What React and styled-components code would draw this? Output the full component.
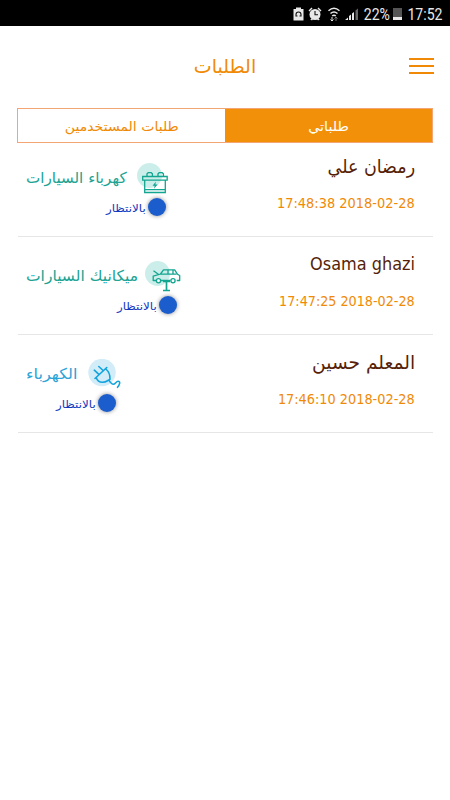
import React, { useState } from "react";
import styled, { createGlobalStyle } from "styled-components";

const GlobalStyle = createGlobalStyle`
  * {
    box-sizing: border-box;
  }
  body {
    margin: 0;
    background: #fff;
    font-family: "DejaVu Sans", sans-serif;
  }
`;

const Screen = styled.div`
  min-height: 800px;
  background: #fff;
`;

const StatusBar = styled.div`
  height: 26px;
  padding: 2px 8px 0 0;
  display: flex;
  align-items: center;
  justify-content: flex-end;
  background: #000;
  color: #e8e8e8;
  font-family: Roboto, sans-serif;
  font-size: 16px;
  white-space: nowrap;
`;

const StatusIcons = styled.svg`
  display: block;
  margin-right: 5px;
`;

const Percent = styled.span`
  width: 26px;
  display: flex;
  justify-content: center;
`;

const Battery = styled.span`
  width: 9px;
  height: 12px;
  margin: 0 5px 0 3px;
  background: linear-gradient(#555 75%, #e8e8e8 75%);
`;

const Clock = styled.span`
  width: 35px;
  display: flex;
  justify-content: center;
`;

const Squeeze = styled.span`
  display: inline-block;
  flex-shrink: 0;
  white-space: nowrap;
  transform: scaleX(${(p) => p.$x || 1});
  transform-origin: ${(p) => p.$origin || "center"};
`;

const Header = styled.header`
  height: 82px;
  padding: 0 16px 3px;
  display: grid;
  grid-template-columns: 26px 1fr 26px;
  align-items: center;
`;

const Title = styled.h1`
  margin: 0;
  grid-column: 2;
  text-align: center;
  font-size: 19px;
  line-height: 24px;
  font-weight: normal;
  color: #f08a06;
`;

const MenuButton = styled.button`
  height: 16px;
  padding: 0;
  border: 0;
  background: none;
  display: flex;
  flex-direction: column;
  align-items: flex-end;
  justify-content: space-between;
`;

const MenuLine = styled.span`
  width: 25px;
  height: 2px;
  background: #f08a06;
`;

const Tabs = styled.div`
  height: 35px;
  margin: 0 17px;
  display: flex;
  border: 1px solid #f3a673;
`;

const Tab = styled.button`
  flex: 1;
  padding: 1px 0 0;
  border: 0;
  font-family: inherit;
  font-size: 13px;
  color: ${(p) => (p.$active ? "#fff" : "#f08a06")};
  background: ${(p) => (p.$active ? "#f29109" : "#fff")};
`;

const List = styled.div`
  margin: -4px 17px 0 18px;
`;

const Row = styled.div`
  height: 98px;
  padding: 0 18px 0 8px;
  display: flex;
  justify-content: space-between;
  border-bottom: 1px solid #e6e6e6;
`;

const Service = styled.div`
  padding-top: 24px;
  color: ${(p) => p.$color};
`;

const ServiceLine = styled.div`
  height: 32px;
  display: flex;
`;

const ServiceName = styled.div`
  width: ${(p) => p.$width}px;
  line-height: 31px;
  font-size: 15px;
  white-space: nowrap;
`;

const Waiting = styled.div`
  height: 24px;
  padding-left: ${(p) => p.$indent}px;
  display: flex;
  align-items: center;
  color: #1238bf;
  font-size: 11px;
`;

const WaitingText = styled.span`
  width: 42px;
  padding-top: 2px;
  white-space: nowrap;
`;

const Dot = styled.span`
  width: 18px;
  height: 18px;
  border-radius: 50%;
  background: #1b5dcd;
  box-shadow: 0 0 4px rgba(0, 0, 0, 0.45);
`;

const Customer = styled.div`
  padding-top: 14px;
  text-align: right;
`;

const Name = styled.div`
  height: 26px;
  line-height: 26px;
  font-size: ${(p) => p.$size}px;
  color: #561f08;
`;

const Time = styled.div`
  margin-top: 12px;
  line-height: 24px;
  font-size: 14px;
  color: #f08a06;
`;

const PhoneIcons = () => (
  <StatusIcons width="66" height="16" viewBox="0 0 66 16">
    <g fill="#e8e8e8">
      <path d="M.5 3H3V1.500h5V3h2.500v11.500H.5z" />
      <circle cx="22" cy="8.500" r="5.500" />
      <path d="M15.500 4.500l3-3 1 1-3 3zM28.500 4.500l-3-3-1 1 3 3zM17 13l2 1.500 1-1.500zM27 13l-2 1.500-1-1.500z" />
      <path d="M52 14l3-2.500V14zM56 14v-4l2-1.500V14zM59 14V7.500L61 6v8z" />
    </g>
    <path d="M62.500 14V4.500L65 2.500V14z" fill="#666" />
    <g fill="none" stroke="#e8e8e8" strokeWidth="1.500">
      <path d="M35.500 4.800Q41-.3 46.500 4.800M37.500 7.500Q41 4.500 44.500 7.500M39.200 10Q41 8.500 42.800 10" />
      <path d="M39 11v4M37.500 13.500l1.500 1.500 1.500-1.500" strokeWidth="1" />
      <path d="M43 15v-4M41.500 12.500L43 11l1.500 1.500" stroke="#777" strokeWidth="1" />
    </g>
    <path d="M3 10.500V8.500a2.500 2.500 0 015 0v2M3 10h1.500M6.500 10H8M22 5V8.800h3" fill="none" stroke="#111" strokeWidth="1.100" />
  </StatusIcons>
);

const BatteryIcon = () => (
  <svg width="32" height="32" viewBox="0 0 32 32">
    <circle cx="12.500" cy="12.500" r="12.500" fill="#cceeea" />
    <g fill="none" stroke="#12a590" strokeWidth="1.300">
      <path d="M5.700 13.500h24.500v3.600H5.700zM7.700 17.100h20.600v12.400H7.700zM7.700 26.700h20.600" />
      <path d="M10 13.200v-2.500l1.200-1h3l1.200 1v2.500M21 13.200v-2.500l1.200-1h3l1.200 1v2.500" />
    </g>
    <path d="M19 18.500l-3.500 4.200h2.200l-.7 3 3.600-4.300h-2.300z" fill="#12a590" />
  </svg>
);

const CarIcon = () => (
  <svg width="36" height="32" viewBox="0 0 36 32">
    <circle cx="12.500" cy="12.500" r="12.500" fill="#cceeea" />
    <g fill="none" stroke="#12a590" strokeWidth="1.300" strokeLinejoin="round">
      <path d="M11 19.500H8.200v-4.300l7.300-2.200 3-4.200h11.200l2.800 4.500 2.200 1.200v5h-3M16 19.500h9.500" />
      <path d="M15.500 13.200h16M23 9v4.200M28 9v4.200M8.500 9.700l5.500 4" />
      <circle cx="13.500" cy="19.700" r="2.100" fill="#fff" />
      <circle cx="28" cy="19.700" r="2.100" fill="#fff" />
      <path d="M18 20.500h7M21.500 20.500v9M18 29.500h7" strokeWidth="1.700" />
    </g>
  </svg>
);

const PlugIcon = () => (
  <svg width="33" height="32" viewBox="0 0 33 32">
    <circle cx="14" cy="13.500" r="13.700" fill="#d2ecf8" />
    <g fill="none" stroke="#12a3dd" strokeWidth="1.600" strokeLinecap="round" strokeLinejoin="round">
      <path d="M7 19.500L18.800 8.500M8.300 18.800c1 3 3 4.500 6 4.500 3 .2 5-1.500 7.700-3M17.800 10c3 2.500 4.300 5.500 4.200 10" />
      <path d="M6.300 11.200l4.300 4M10.800 7.500l4.300 4M21 21.500c1.500 1.500 2 3.800 4 3.800 2.500 0 3-3 5-3 3 0 1.500 3.500-.5 6" />
    </g>
  </svg>
);

const orders = [
  {
    name: "رمضان علي", nameSize: 19, nameX: 0.92, time: "17:48:38 2018-02-28", timeX: 0.926,
    service: "كهرباء السيارات", width: 111, scale: 1.01, color: "#20a392",
    indent: 80, Icon: BatteryIcon,
  },
  {
    name: "Osama ghazi", nameSize: 17.5, nameX: 0.92, time: "17:47:25 2018-02-28", timeX: 0.912,
    service: "ميكانيك السيارات", width: 119, scale: 1.035, color: "#20a392",
    indent: 91, Icon: CarIcon,
  },
  {
    name: "المعلم حسين", nameSize: 19, nameX: 0.98, time: "17:46:10 2018-02-28", timeX: 0.92,
    service: "الكهرباء", width: 62, scale: 1.07, color: "#2ba4d8",
    indent: 30, Icon: PlugIcon,
  },
];

const Order = ({ order }) => {
  const { Icon } = order;

  return (
    <Row>
      <Service $color={order.color}>
        <ServiceLine>
          <ServiceName $width={order.width}>
            <Squeeze $x={order.scale} $origin="left">{order.service}</Squeeze>
          </ServiceName>
          <Icon />
        </ServiceLine>
        <Waiting $indent={order.indent}>
          <WaitingText><Squeeze $x={1.08} $origin="left">بالانتظار</Squeeze></WaitingText>
          <Dot />
        </Waiting>
      </Service>
      <Customer>
        <Name $size={order.nameSize}>
          <Squeeze $x={order.nameX} $origin="right">{order.name}</Squeeze>
        </Name>
        <Time><Squeeze $x={order.timeX} $origin="right">{order.time}</Squeeze></Time>
      </Customer>
    </Row>
  );
};

const App = () => {
  const [tab, setTab] = useState("mine");

  return (
    <Screen>
      <GlobalStyle />
      <StatusBar>
        <PhoneIcons />
        <Percent><Squeeze $x={0.88}>22%</Squeeze></Percent>
        <Battery />
        <Clock><Squeeze $x={0.88}>17:52</Squeeze></Clock>
      </StatusBar>
      <Header>
        <Title>الطلبات</Title>
        <MenuButton aria-label="menu">
          <MenuLine />
          <MenuLine />
          <MenuLine />
        </MenuButton>
      </Header>
      <Tabs>
        <Tab $active={tab === "users"} onClick={() => setTab("users")}>
          <Squeeze $x={1.08}>طلبات المستخدمين</Squeeze>
        </Tab>
        <Tab $active={tab === "mine"} onClick={() => setTab("mine")}>
          <Squeeze $x={1.1}>طلباتي</Squeeze>
        </Tab>
      </Tabs>
      <List>
        {orders.map((order) => (
          <Order key={order.time} order={order} />
        ))}
      </List>
    </Screen>
  );
};

export default App;
